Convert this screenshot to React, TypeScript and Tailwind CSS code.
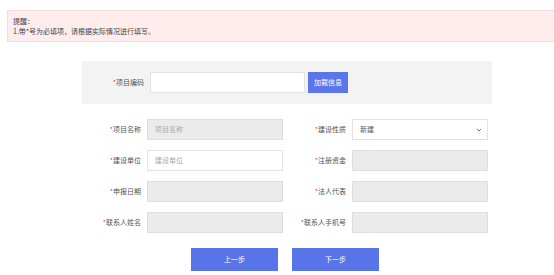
import React from "react";

const font = { fontFamily: '"Noto Sans CJK SC", "Liberation Sans", sans-serif' };

function Label({ text, w }: { text: string; w: string }) {
  return (
    <div className={`${w} shrink-0 pr-[6px] text-right text-[7px] text-[#555]`}>
      <span className="text-[#e84a4a]">*</span>
      {text}
    </div>
  );
}

function Field({
  label,
  placeholder,
  disabled = true,
}: {
  label: string;
  placeholder?: string;
  disabled?: boolean;
}) {
  return (
    <div className="flex h-[21px] items-center">
      <Label text={label} w="w-[65px]" />
      <div
        className={`flex h-[21px] w-[136px] items-center border px-[7px] text-[7px] text-[#aaa] ${
          disabled ? "border-[#dedede] bg-[#ebebeb]" : "border-[#e3e3e3] bg-white"
        }`}
      >
        {placeholder}
      </div>
    </div>
  );
}

export default function App() {
  return (
    <div className="h-[275px] w-[554px] overflow-hidden bg-white" style={font}>
      {/* Notice */}
      <div className="pt-[10px] pl-[7px]">
        <div className="-mr-2 h-[32px] border border-[#f6d9d9] bg-[#ffecec] px-[5px] pt-[5px] text-[7px] leading-[10px] text-[#444]">
          <p>提醒：</p>
          <p>1.带*号为必填项，请根据实际情况进行填写。</p>
        </div>
      </div>

      <div className="ml-[82px] w-[410px]">
        {/* Project code */}
        <div className="mt-[19px] flex h-[43px] items-center bg-[#f3f3f3]">
          <Label text="项目编码" w="w-[68px]" />
          <div className="h-[21px] w-[155px] border border-[#e3e3e3] bg-white" />
          <button className="ml-[3px] h-[21px] w-[40px] bg-[#5a76ea] text-[7px] text-white">
            加载信息
          </button>
        </div>

        {/* Fields */}
        <div className="mt-[15px] grid grid-cols-[205px_205px] gap-y-[10px]">
          <Field label="项目名称" placeholder="项目名称" />
          <div className="flex h-[21px] items-center">
            <Label text="建设性质" w="w-[65px]" />
            <div className="flex h-[21px] w-[136px] items-center justify-between border border-[#e3e3e3] bg-white px-[7px] text-[7px] text-[#555]">
              <span>新建</span>
              <svg width="6" height="4" viewBox="0 0 6 4" className="mr-[-2px]">
                <path d="M0.8 0.8 L3 3 L5.2 0.8" stroke="#666" strokeWidth="0.9" fill="none" />
              </svg>
            </div>
          </div>

          <Field label="建设单位" placeholder="建设单位" disabled={false} />
          <Field label="注册资金" />

          <Field label="申报日期" />
          <Field label="法人代表" />

          <Field label="联系人姓名" />
          <Field label="联系人手机号" />
        </div>
      </div>

      {/* Buttons */}
      <div className="mt-[15px] ml-[191px] flex gap-[14px]">
        <button className="h-[23px] w-[87px] bg-[#5775e8] text-[7px] text-white">上一步</button>
        <button className="h-[23px] w-[87px] bg-[#5775e8] text-[7px] text-white">下一步</button>
      </div>
    </div>
  );
}
